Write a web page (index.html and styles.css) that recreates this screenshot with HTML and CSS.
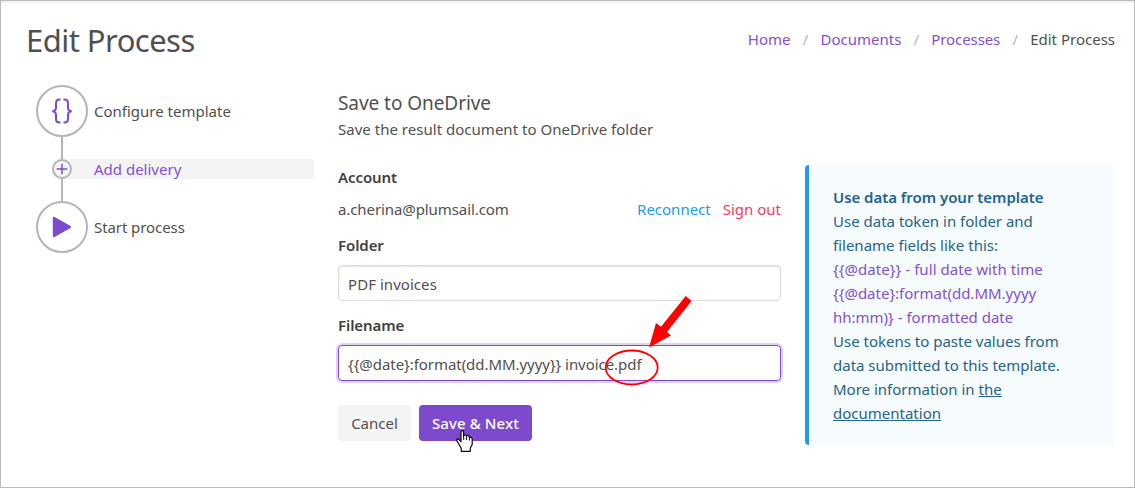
FILE: index.html
```html
<!DOCTYPE html>
<html lang="en">
<head>
<meta charset="utf-8">
<title>Edit Process</title>
<link rel="stylesheet" href="styles.css">
</head>
<body>
<div class="page">
  <header class="header">
    <h1 class="title">Edit Process</h1>
    <nav class="crumbs">
      <a class="crumb crumb-home">Home</a><span class="slash">/</span>
      <a class="crumb crumb-docs">Documents</a><span class="slash">/</span>
      <a class="crumb crumb-proc">Processes</a><span class="slash">/</span>
      <span class="crumb crumb-current">Edit Process</span>
    </nav>
  </header>
  <main class="columns">
    <aside class="steps">
      <div class="step">
        <span class="circle">
          <svg width="22" height="28" viewBox="0 0 22 28" fill="none" stroke="#7e4acd" stroke-width="2"><path d="M9.500 2.500H8.500Q5 2.500 5 6V10.500Q5 14 1.200 14.200Q5 14.400 5 18V22Q5 25.500 8.500 25.500H9.500M12.500 2.500H13.500Q17 2.500 17 6V10.500Q17 14 20.800 14.200Q17 14.400 17 18V22Q17 25.500 13.500 25.500H12.500"/></svg>
        </span>
        <span class="label">Configure template</span>
      </div>
      <div class="connector"></div>
      <div class="step step-small">
        <span class="circle circle-small">
          <svg width="12" height="12" viewBox="0 0 12 12" stroke="#7e4acd" stroke-width="1.5"><path d="M6 .7V11.300M.7 6H11.300"/></svg>
        </span>
        <span class="label">Add delivery</span>
      </div>
      <div class="connector"></div>
      <div class="step">
        <span class="circle">
          <svg width="20" height="22" viewBox="0 0 20 22"><path d="M2 2L18 11L2 20Z" fill="#7e4acd" stroke="#7e4acd" stroke-width="2.400" stroke-linejoin="round"/></svg>
        </span>
        <span class="label step-three">Start process</span>
      </div>
    </aside>
    <section class="form">
      <h2 class="subtitle">Save to OneDrive</h2>
      <p class="desc">Save the result document to OneDrive folder</p>
      <div class="field-label account-label">Account</div>
      <div class="account">
        <span class="mail">a.cherina@plumsail.com</span>
        <span class="actions"><a class="reconnect">Reconnect</a><a class="signout">Sign out</a></span>
      </div>
      <div class="field-label folder-label">Folder</div>
      <div class="input">PDF invoices</div>
      <div class="field-label name-label">Filename</div>
      <div class="input input-focus">{{@date}:format(dd.MM.yyyy}} invoice.pdf</div>
      <div class="buttons">
        <button class="btn">Cancel</button>
        <button class="btn btn-primary">Save &amp; Next</button>
      </div>
    </section>
    <aside class="notice">
      <div><b>Use data from your template</b></div>
      <div>Use data token in folder and</div>
      <div>filename fields like this:</div>
      <div class="token token-full">{{@date}} - full date with time</div>
      <div class="token">{{@date}:format(dd.MM.yyyy</div>
      <div class="token">hh:mm)} - formatted date</div>
      <div>Use tokens to paste values from</div>
      <div>data submitted to this template.</div>
      <div>More information in <u>the</u></div>
      <div><u>documentation</u></div>
    </aside>
  </main>
  <svg class="marks" width="1135" height="488" viewBox="0 0 1135 488">
    <ellipse cx="631.7" cy="367.5" rx="26" ry="17" fill="none" stroke="#f00" stroke-width="1.8"/>
    <path d="M685.7 296L691.6 301L667 332L671 335.500L649 347.500L656 323L661 326.800Z" fill="#f00"/>
    <g transform="translate(456 430)">
      <path d="M5 2Q5 .6 6.300.6T7.600 2V6Q8 4.700 9.300 4.900T10.600 6Q11.200 5.200 12.300 5.600T13.400 7.200Q15.600 6.800 16.200 8.800V14.500L14.300 18V21.300H5.300V18.500L2.800 14L.8 10.800Q.4 9 2 8.800L5 11.500Z" fill="#fff" stroke="#080816" stroke-width="1.200" stroke-linejoin="round"/>
      <path d="M7.700 5.500V10M10.600 6V10M13.400 7V10.500" stroke="#080816" stroke-width="1"/>
    </g>
  </svg>
</div>
</body>
</html>
```

FILE: styles.css
```css
* { box-sizing: border-box; }
body { margin: 0; }
.page {
  position: relative;
  width: 1135px;
  height: 488px;
  overflow: hidden;
  border: 1px solid #bbb;
  background: linear-gradient(#f3f3f3 2px, #fff 2px);
  color: #505050;
  font: 15px/24px "Noto Sans", sans-serif;
  white-space: nowrap;
}
h1, h2, p { margin: 0; font-weight: 400; }
.header { display: flex; justify-content: space-between; height: 84px; padding: 15px 19px 0 25px; }
.title { font-size: 31px; line-height: 48px; letter-spacing: -.55px; }
.crumbs { display: flex; padding-top: 11px; }
.slash { width: 30px; text-align: center; color: #b5b5b5; }
.crumbs .crumb:not(.crumb-current) { color: #8450d0; }
.crumbs .crumb-proc { letter-spacing: -.1px; }
.columns { display: grid; grid-template-columns: 278px 443px 310px; column-gap: 24px; padding-left: 35px; align-items: start; }
.step { display: flex; align-items: center; gap: 6px; height: 52px; }
.step-three { letter-spacing: -.08px; }
.circle { display: flex; align-items: center; justify-content: center; flex: none; width: 52px; height: 52px; border: 2px solid #b5b5b5; border-radius: 50%; background: #fff; }
.circle-small { width: 20px; height: 20px; background: #f4f4f4; }
.step-small { height: 20px; margin-left: 16px; gap: 22px; border-radius: 10px 3px 3px 10px; background: #f4f4f4; color: #8450d0; }
.connector { width: 2px; height: 22px; margin-left: 25px; background: #b5b5b5; }
.form { padding-top: 6px; }
.subtitle { font-size: 19px; line-height: 24px; letter-spacing: -.06px; }
.desc { margin-top: 2px; letter-spacing: .02px; }
.field-label { font-weight: 600; color: #404040; letter-spacing: -.08px; }
.account-label { margin-top: 24px; }
.account { display: flex; justify-content: space-between; margin-top: 8px; }
.mail { letter-spacing: -.09px; }
.actions { display: flex; gap: 12px; }
.reconnect { color: #209cee; }
.signout { color: #ff3860; }
.folder-label { margin-top: 12px; }
.input { display: flex; align-items: center; height: 36px; margin-top: 8px; padding: 2px 0 0 9px; border: 1px solid #dbdbdb; border-radius: 4px; box-shadow: inset 0 1px 2px rgba(10,10,10,.1); letter-spacing: .05px; }
.name-label { margin-top: 12px; }
.input-focus { border-color: #7e4acd; box-shadow: 0 0 0 2px rgba(126,74,205,.25); letter-spacing: -.05px; }
.buttons { display: flex; gap: 8px; margin-top: 24px; }
.btn { width: 73px; height: 36px; padding: 0; border: 0; border-radius: 4px; background: #f4f4f4; color: #505050; font: inherit; }
.btn-primary { width: 113px; background: #7e4acd; color: #fff; font-weight: 500; letter-spacing: .1px; }
.notice { height: 280px; margin-top: 80px; padding: 20px 0 0 24px; border-left: 4px solid #209cee; border-radius: 4px; background: #f6fbfe; color: #25638c; }
.notice b { font-weight: 600; letter-spacing: -.04px; }
.token { color: #8450d0; }
.token-full { letter-spacing: .06px; }
.marks { position: absolute; left: -1px; top: -1px; }
```
